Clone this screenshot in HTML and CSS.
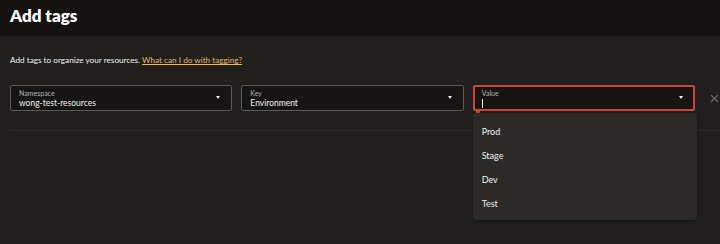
FILE: index.html
```html
<!DOCTYPE html>
<html lang="en">
<head>
    <meta charset="UTF-8">
    <title>Add tags</title>
    <link rel="stylesheet" href="styles.css">
</head>
<body>
    <header class="panel-header">
        <h1>Add tags</h1>
    </header>

    <main class="panel-body">
        <p class="intro">Add tags to organize your resources. <a href="#">What can I do with tagging?</a></p>

        <div class="tag-row">
            <div class="field">
                <span class="field-label">Namespace</span>
                <span class="field-value">wong-test-resources</span>
                <span class="caret"></span>
            </div>
            <div class="field">
                <span class="field-label">Key</span>
                <span class="field-value">Environment</span>
                <span class="caret"></span>
            </div>
            <div class="field field-error">
                <span class="field-label">Value</span>
                <span class="field-value"><span class="cursor"></span></span>
                <span class="caret"></span>
                <span class="error-mark"></span>
                <ul class="menu">
                    <li>Prod</li>
                    <li>Stage</li>
                    <li>Dev</li>
                    <li>Test</li>
                </ul>
            </div>
            <button class="remove-btn" aria-label="Remove tag">
                <svg width="9" height="9" viewBox="0 0 9 9"><path d="M1 1L8 8M8 1L1 8" stroke="#6f6d6a" stroke-width="1.2"/></svg>
            </button>
        </div>

        <div class="divider"></div>
    </main>
</body>
</html>
```

FILE: styles.css
```css
:root {
    --header-bg: #141312;
    --body-bg: #201f1e;
    --field-bg: #161514;
    --field-border: #5b5a58;
    --error-color: #c74634;
    --link-color: #e5b65a;
    --text-color: #f2f0ed;
    --muted-text: #b5b3b0;
    --menu-bg: #2b2a28;
}

* {
    margin: 0;
    padding: 0;
    box-sizing: border-box;
    font-family: Lato, 'Noto Sans', sans-serif;
}

body {
    background-color: var(--body-bg);
    color: var(--text-color);
    width: 720px;
    height: 244px;
    overflow: hidden;
}

.panel-header {
    background-color: var(--header-bg);
    height: 36px;
    padding: 4px 10px 0;
}

.panel-header h1 {
    font-size: 17px;
    font-weight: 800;
    line-height: 24px;
    color: #ffffff;
}

.panel-body {
    padding: 18px 0 0 10px;
}

.intro {
    font-size: 8.2px;
    line-height: 12px;
    color: var(--text-color);
}

.intro a {
    color: var(--link-color);
    text-decoration: underline;
}

.tag-row {
    display: flex;
    align-items: center;
    gap: 9px;
    margin-top: 19px;
}

.field {
    position: relative;
    width: 223px;
    height: 26px;
    background-color: var(--field-bg);
    border: 1px solid var(--field-border);
    border-radius: 2px;
    padding: 3px 0 0 8px;
}

.field-error {
    border: 2px solid var(--error-color);
    padding: 2px 0 0 7px;
}

.field-label {
    display: block;
    font-size: 7px;
    line-height: 8px;
    color: var(--muted-text);
}

.field-value {
    display: block;
    font-size: 8.5px;
    line-height: 12px;
    color: var(--text-color);
}

.cursor {
    display: inline-block;
    width: 1px;
    height: 9px;
    margin-top: 2px;
    background-color: var(--text-color);
}

.caret {
    position: absolute;
    right: 11px;
    top: 10px;
    border-left: 2.5px solid transparent;
    border-right: 2.5px solid transparent;
    border-top: 3px solid #f2f0ed;
}

.field-error .caret {
    right: 10px;
    top: 9px;
}

.error-mark {
    position: absolute;
    left: 1px;
    bottom: -4px;
    width: 4px;
    height: 2px;
    background-color: var(--error-color);
}

.menu {
    position: absolute;
    left: -2px;
    top: 26px;
    width: 224px;
    height: 107px;
    list-style: none;
    background-color: var(--menu-bg);
    border-radius: 3px;
    box-shadow: 0 1px 3px rgba(0,0,0,0.4);
    padding-top: 13px;
    z-index: 2;
}

.menu li {
    font-size: 9px;
    line-height: 12px;
    height: 24px;
    padding-left: 9px;
    color: var(--text-color);
}

.remove-btn {
    background: none;
    border: none;
    width: 11px;
    height: 11px;
    margin-left: 5px;
    display: flex;
    align-items: center;
    justify-content: center;
}

.divider {
    margin-top: 19px;
    height: 1px;
    background-color: #2d2c2b;
}
```
